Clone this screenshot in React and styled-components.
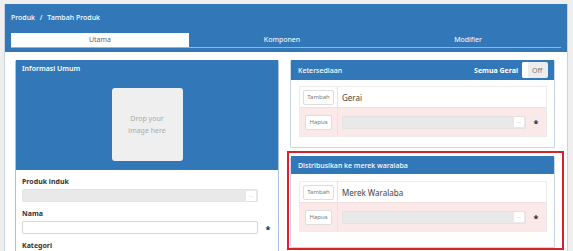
import React from "react";
import styled, { createGlobalStyle } from "styled-components";

const GlobalStyle = createGlobalStyle`
  body {
    margin: 0;
    background: #efefef;
    font-family: "Noto Sans", "Open Sans", sans-serif;
  }
`;

const App = () => {
  return (
    <>
      <GlobalStyle />
      <Page>
        <Panel>
          <Header>
            <Breadcrumb>
              Produk <Sep>/</Sep> Tambah Produk
            </Breadcrumb>
            <Tabs>
              <Tab active>Utama</Tab>
              <Tab>Komponen</Tab>
              <Tab>Modifier</Tab>
            </Tabs>
          </Header>
          <Content>
            <LeftCard>
              <CardHero>
                <CardTitle>Informasi Umum</CardTitle>
                <DropZone>
                  Drop your
                  <br />
                  image here
                </DropZone>
              </CardHero>
              <FormBody>
                <Label>Produk induk</Label>
                <FieldRow>
                  <Input disabled>
                    <Dots>...</Dots>
                  </Input>
                  <Required />
                </FieldRow>
                <Label>Nama</Label>
                <FieldRow>
                  <Input />
                  <Required>*</Required>
                </FieldRow>
                <Label>Kategori</Label>
              </FormBody>
            </LeftCard>

            <RightColumn>
              <Card>
                <CardHead tall>
                  <HeadTitle>Ketersediaan</HeadTitle>
                  <HeadRight>
                    Semua Gerai
                    <Toggle>
                      <Knob />
                      Off
                    </Toggle>
                  </HeadRight>
                </CardHead>
                <CardBody pb={10}>
                  <Table>
                    <Row>
                      <BtnCell>
                        <SmallBtn>Tambah</SmallBtn>
                      </BtnCell>
                      <TextCell>Gerai</TextCell>
                    </Row>
                    <Row danger>
                      <BtnCell>
                        <SmallBtn>Hapus</SmallBtn>
                      </BtnCell>
                      <TextCell>
                        <FieldRow>
                          <Input disabled>
                            <Dots>...</Dots>
                          </Input>
                          <Required>*</Required>
                        </FieldRow>
                      </TextCell>
                    </Row>
                  </Table>
                </CardBody>
              </Card>

              <Highlighted>
                <Card>
                  <CardHead>
                    <HeadTitle>Distribusikan ke merek waralaba</HeadTitle>
                  </CardHead>
                  <CardBody pt={7} pb={15}>
                    <Table>
                      <Row>
                        <BtnCell>
                          <SmallBtn>Tambah</SmallBtn>
                        </BtnCell>
                        <TextCell>Merek Waralaba</TextCell>
                      </Row>
                      <Row danger>
                        <BtnCell>
                          <SmallBtn>Hapus</SmallBtn>
                        </BtnCell>
                        <TextCell>
                          <FieldRow>
                            <Input disabled>
                              <Dots>...</Dots>
                            </Input>
                            <Required>*</Required>
                          </FieldRow>
                        </TextCell>
                      </Row>
                    </Table>
                  </CardBody>
                </Card>
              </Highlighted>
            </RightColumn>
          </Content>
        </Panel>
      </Page>
    </>
  );
};

const Page = styled.div`
  padding: 4px 5px 0 4px;
  height: 247px;
  overflow: hidden;
`;
const Panel = styled.div`
  border: 1px solid #c4d4e4;
  border-top: none;
  border-bottom: none;
  background: #fff;
  height: 100%;
`;
const Header = styled.div`
  background: #3278b8;
  height: 48px;
  padding: 8px 6px 0 6px;
  box-sizing: border-box;
`;
const Breadcrumb = styled.div`
  color: #fff;
  font-size: 7px;
  font-weight: 500;
  height: 11px;
  line-height: 11px;
`;
const Sep = styled.span`
  margin: 0 3px;
`;
const Tabs = styled.div`
  margin-top: 10px;
  display: grid;
  grid-template-columns: 178px 1fr 1fr;
  border-bottom: 1px solid #8db8dd;
`;
const Tab = styled.div`
  height: 14px;
  line-height: 14px;
  font-size: 7px;
  text-align: center;
  color: ${(p) => (p.active ? "#666" : "#fff")};
  background: ${(p) => (p.active ? "#fff" : "transparent")};
`;
const Content = styled.div`
  display: grid;
  grid-template-columns: 264px 265px;
  gap: 11px;
  padding: 8px 0 0 10px;
`;
const LeftCard = styled.div`
  border: 1px solid #a9c5e2;
  border-top: none;
  border-radius: 2px;
  height: 200px;
`;
const CardHero = styled.div`
  background: #3278b8;
  height: 110px;
  padding: 4px 6px 0;
  box-sizing: border-box;
  display: flex;
  flex-direction: column;
  align-items: center;
`;
const CardTitle = styled.div`
  align-self: flex-start;
  color: #fff;
  font-size: 7px;
  font-weight: 600;
  line-height: 10px;
`;
const DropZone = styled.div`
  margin-top: 14px;
  width: 71px;
  height: 73px;
  background: #efefef;
  border-radius: 3px;
  color: #aaa;
  font-size: 7px;
  line-height: 12px;
  text-align: center;
  display: flex;
  align-items: center;
  justify-content: center;
`;
const FormBody = styled.div`
  padding: 6px 0 0 6px;
`;
const Label = styled.div`
  font-size: 7px;
  font-weight: 700;
  color: #333;
  height: 12px;
  line-height: 12px;
  margin-bottom: 1px;
`;
const FieldRow = styled.div`
  display: flex;
  align-items: center;
  margin-bottom: 6px;
  &:last-child {
    margin-bottom: 0;
  }
`;
const Input = styled.div`
  flex: 1;
  height: 13px;
  box-sizing: border-box;
  border: 1px solid ${(p) => (p.disabled ? "#e2e2e2" : "#d6d6d6")};
  background: ${(p) => (p.disabled ? "#e9e9e9" : "#fff")};
  border-radius: 2px;
  display: flex;
  justify-content: flex-end;
  align-items: center;
  padding-right: 1px;
`;
const Dots = styled.span`
  width: 10px;
  height: 10px;
  background: #fff;
  border-radius: 1px;
  color: #bbb;
  font-size: 5px;
  line-height: 8px;
  text-align: center;
`;
const Required = styled.span`
  width: 20px;
  flex: none;
  text-align: center;
  font-size: 9px;
  font-weight: 700;
  color: #222;
  line-height: 9px;
  padding-top: 3px;
`;
const RightColumn = styled.div`
  display: flex;
  flex-direction: column;
  gap: 8px;
`;
const Card = styled.div`
  border: 1px solid #c6d6e6;
  border-top: none;
  border-radius: 2px;
  background: #fff;
`;
const CardHead = styled.div`
  background: #3278b8;
  height: ${(p) => (p.tall ? "20px" : "18px")};
  padding: 0 6px 0 7px;
  display: flex;
  align-items: center;
  justify-content: space-between;
`;
const HeadTitle = styled.div`
  color: #fff;
  font-size: 7px;
  font-weight: 500;
`;
const HeadRight = styled.div`
  display: flex;
  align-items: center;
  gap: 4px;
  color: #fff;
  font-size: 7px;
  font-weight: 700;
`;
const Toggle = styled.div`
  width: 26px;
  height: 16px;
  background: #ececec;
  border-radius: 2px;
  display: flex;
  align-items: center;
  color: #777;
  font-weight: 400;
  font-size: 7px;
  gap: 4px;
  overflow: hidden;
`;
const Knob = styled.span`
  width: 6px;
  height: 100%;
  background: #fff;
`;
const CardBody = styled.div`
  padding: ${(p) => p.pt || 6}px 7px ${(p) => p.pb || 10}px 8px;
`;
const Table = styled.div`
  border: 1px solid #ececec;
`;
const Row = styled.div`
  display: grid;
  grid-template-columns: 38px 1fr;
  background: ${(p) => (p.danger ? "#fbe8e8" : "#fff")};
  height: ${(p) => (p.danger ? "28px" : "20px")};
  & + & {
    border-top: 1px solid #f2dede;
  }
`;
const BtnCell = styled.div`
  display: flex;
  align-items: center;
  justify-content: center;
  border-right: 1px solid #f0e0e0;
`;
const TextCell = styled.div`
  display: flex;
  flex-direction: column;
  justify-content: center;
  padding-left: 4px;
  font-size: 8px;
  color: #444;
`;
const SmallBtn = styled.div`
  background: #fff;
  border: 1px solid #ddd;
  border-radius: 2px;
  color: #777;
  font-size: 6px;
  padding: 3px 3px;
  line-height: 7px;
`;
const Highlighted = styled.div`
  position: relative;
  &::after {
    content: "";
    position: absolute;
    inset: -5px -9px -2px -3px;
    border: 2px solid #d4232b;
    pointer-events: none;
  }
`;

export default App;
